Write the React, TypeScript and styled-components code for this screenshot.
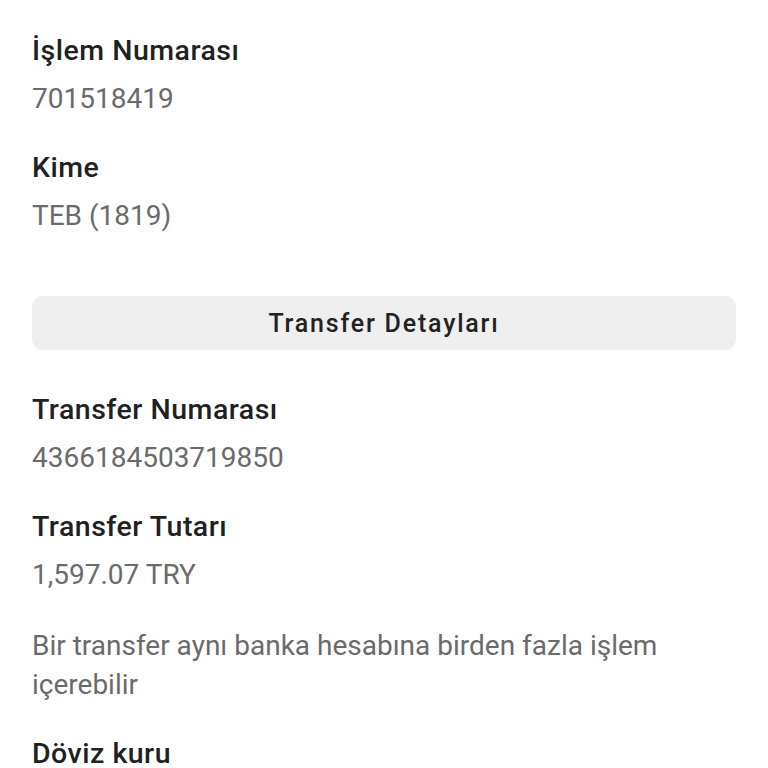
import React from 'react';
import styled, { createGlobalStyle } from 'styled-components';

const GlobalStyle = createGlobalStyle`
  html, body {
    margin: 0;
    padding: 0;
    background: #ffffff;
  }
  body {
    font-family: Roboto, "Noto Sans", sans-serif;
    -webkit-font-smoothing: antialiased;
  }
`;

const Page = styled.div`
  width: 768px;
  height: 768px;
  overflow: hidden;
  box-sizing: border-box;
  padding: 27px 32px 0 32px;
  display: flex;
  flex-direction: column;

  & > * {
    flex-shrink: 0;
  }
`;

const Field = styled.div<{ $gap?: number }>`
  display: flex;
  flex-direction: column;
  margin-bottom: ${(p) => p.$gap ?? 21}px;
`;

const Label = styled.div`
  font-size: 28.5px;
  line-height: 48px;
  font-weight: 500;
  letter-spacing: 0.5px;
  color: #212121;
  white-space: nowrap;
`;

const Value = styled.div`
  font-size: 28px;
  line-height: 48px;
  font-weight: 400;
  color: #6b6b6b;
  white-space: nowrap;
`;

const Note = styled.p`
  margin: 0 0 26px 0;
  font-size: 28px;
  line-height: 39px;
  font-weight: 400;
  color: #6b6b6b;
`;

const SectionBar = styled.div`
  margin: 56px 0 36px 0;
  height: 54px;
  border-radius: 11px;
  background: #efefef;
  display: flex;
  align-items: center;
  justify-content: center;
  font-size: 25px;
  font-weight: 500;
  letter-spacing: 1.8px;
  color: #222222;
`;

const fieldsTop = [
  { label: 'İşlem Numarası', value: '701518419' },
  { label: 'Kime', value: 'TEB (1819)' },
];

const fieldsBottom = [
  { label: 'Transfer Numarası', value: '4366184503719850' },
  { label: 'Transfer Tutarı', value: '1,597.07 TRY' },
];

export default function App() {
  return (
    <>
      <GlobalStyle />
      <Page>
        {fieldsTop.map((f, i) => (
          <Field key={f.label} $gap={i === fieldsTop.length - 1 ? 0 : 21}>
            <Label>{f.label}</Label>
            <Value>{f.value}</Value>
          </Field>
        ))}
        <SectionBar>Transfer Detayları</SectionBar>
        {fieldsBottom.map((f, i) => (
          <Field key={f.label} $gap={i === fieldsBottom.length - 1 ? 27 : 21}>
            <Label>{f.label}</Label>
            <Value>{f.value}</Value>
          </Field>
        ))}
        <Note>Bir transfer aynı banka hesabına birden fazla işlem içerebilir</Note>
        <Label>Döviz kuru</Label>
      </Page>
    </>
  );
}
